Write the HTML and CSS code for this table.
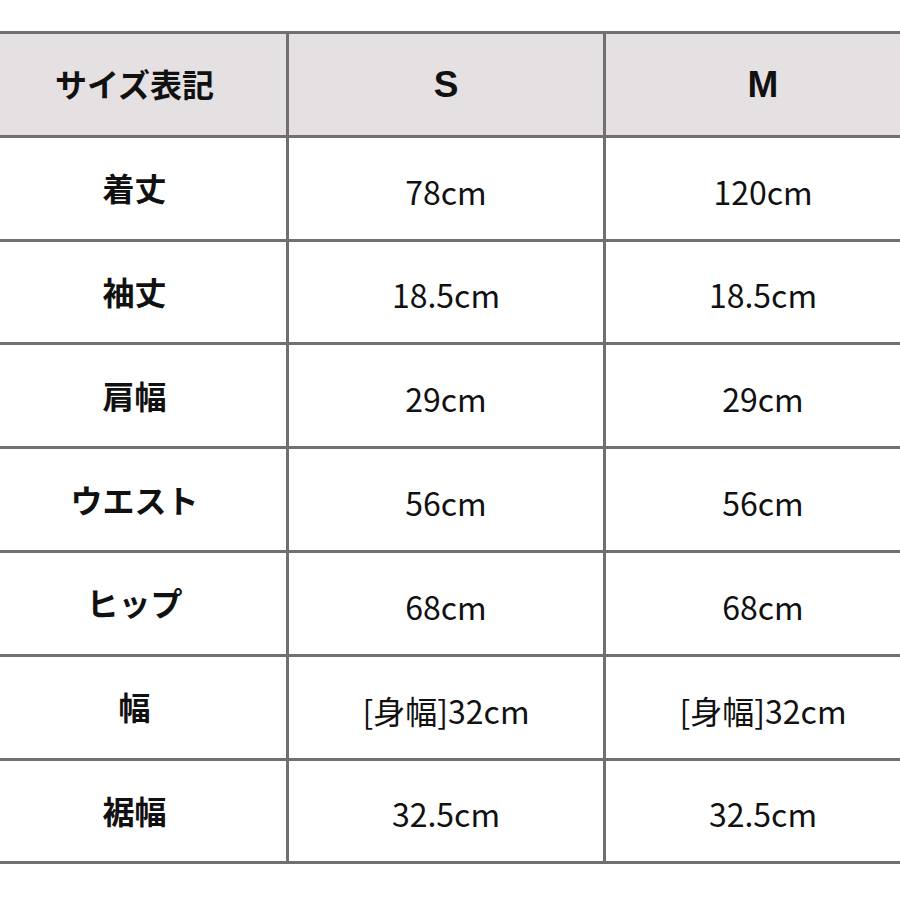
FILE: index.html
```html
<!DOCTYPE html>
<html lang="ja">
<head>
<meta charset="utf-8">
<link rel="stylesheet" href="styles.css">
</head>
<body>
<table class="size-table">
  <colgroup>
    <col class="c1"><col class="c2"><col class="c3">
  </colgroup>
  <thead>
    <tr class="head">
      <th class="label">サイズ表記</th>
      <th class="size">S</th>
      <th class="size">M</th>
    </tr>
  </thead>
  <tbody>
    <tr><th class="label">着丈</th><td>78cm</td><td>120cm</td></tr>
    <tr><th class="label">袖丈</th><td>18.5cm</td><td>18.5cm</td></tr>
    <tr><th class="label">肩幅</th><td>29cm</td><td>29cm</td></tr>
    <tr><th class="label">ウエスト</th><td>56cm</td><td>56cm</td></tr>
    <tr><th class="label">ヒップ</th><td>68cm</td><td>68cm</td></tr>
    <tr><th class="label">幅</th><td>[身幅]32cm</td><td>[身幅]32cm</td></tr>
    <tr><th class="label">裾幅</th><td>32.5cm</td><td>32.5cm</td></tr>
  </tbody>
</table>
</body>
</html>
```
FILE: styles.css
```css
html, body {
  margin: 0;
  padding: 0;
  background: #ffffff;
  overflow: hidden;
}
body {
  width: 900px;
  height: 900px;
  font-family: "Noto Sans CJK JP", "Noto Sans", sans-serif;
  color: #111111;
}
.size-table {
  border-collapse: collapse;
  table-layout: fixed;
  width: 940px;
  margin: 31px 0 0 -20px;
}
.c1 { width: 306px; }
.c2 { width: 317px; }
.c3 { width: 317px; }
.size-table th,
.size-table td {
  border: 3px solid #707070;
  height: 100.8px;
  padding: 0;
  text-align: center;
  vertical-align: middle;
  font-size: 32px;
  line-height: 1;
}
.size-table td {
  font-weight: 400;
  height: 95.8px;
  padding-top: 5px;
}
.size-table th.label {
  font-weight: 700;
  font-size: 32px;
  height: 98.8px;
  padding-bottom: 2px;
}
.head th {
  background: #e5e1e3;
}
.head th.size {
  font-family: "Liberation Sans", Arial, sans-serif;
  font-weight: 700;
  font-size: 37px;
  height: 100.8px;
  padding: 0;
}
```
